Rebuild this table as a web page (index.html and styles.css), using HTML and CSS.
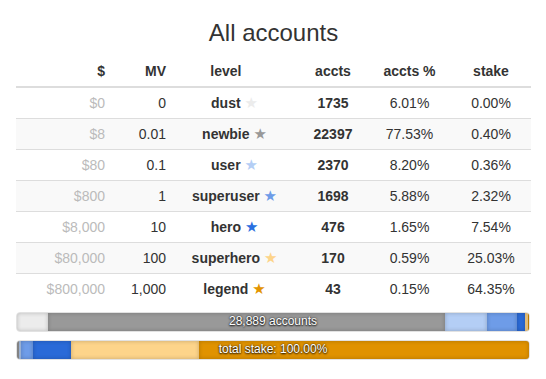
FILE: index.html
```html
<!DOCTYPE html>
<html>
<head>
<meta charset="utf-8">
<link rel="stylesheet" href="styles.css">
</head>
<body>
<div class="page">
  <h3 class="title">All accounts</h3>
  <table class="tbl">
    <colgroup>
      <col style="width:94px"><col style="width:61px"><col style="width:127px"><col style="width:70px"><col style="width:83px"><col style="width:80px">
    </colgroup>
    <thead>
      <tr>
        <th class="r">$</th>
        <th class="r">MV</th>
        <th class="c">level <span class="star hidden">★</span></th>
        <th class="c">accts</th>
        <th class="c">accts %</th>
        <th class="c">stake</th>
      </tr>
    </thead>
    <tbody>
      <tr><td class="r usd">$0</td><td class="r">0</td><td class="c b">dust <span class="star s-dust">★</span></td><td class="c b">1735</td><td class="c">6.01%</td><td class="c">0.00%</td></tr>
      <tr><td class="r usd">$8</td><td class="r">0.01</td><td class="c b">newbie <span class="star s-newbie">★</span></td><td class="c b">22397</td><td class="c">77.53%</td><td class="c">0.40%</td></tr>
      <tr><td class="r usd">$80</td><td class="r">0.1</td><td class="c b">user <span class="star s-user">★</span></td><td class="c b">2370</td><td class="c">8.20%</td><td class="c">0.36%</td></tr>
      <tr><td class="r usd">$800</td><td class="r">1</td><td class="c b">superuser <span class="star s-superuser">★</span></td><td class="c b">1698</td><td class="c">5.88%</td><td class="c">2.32%</td></tr>
      <tr><td class="r usd">$8,000</td><td class="r">10</td><td class="c b">hero <span class="star s-hero">★</span></td><td class="c b">476</td><td class="c">1.65%</td><td class="c">7.54%</td></tr>
      <tr><td class="r usd">$80,000</td><td class="r">100</td><td class="c b">superhero <span class="star s-superhero">★</span></td><td class="c b">170</td><td class="c">0.59%</td><td class="c">25.03%</td></tr>
      <tr><td class="r usd">$800,000</td><td class="r">1,000</td><td class="c b">legend <span class="star s-legend">★</span></td><td class="c b">43</td><td class="c">0.15%</td><td class="c">64.35%</td></tr>
    </tbody>
  </table>
  <div class="progress">
    <div class="seg bg-dust" style="width:6.01%"></div>
    <div class="seg bg-newbie" style="width:77.53%"></div>
    <div class="seg bg-user" style="width:8.20%"></div>
    <div class="seg bg-superuser" style="width:5.88%"></div>
    <div class="seg bg-hero" style="width:1.65%"></div>
    <div class="seg bg-superhero" style="width:0.59%"></div>
    <div class="seg bg-legend" style="width:0.15%"></div>
    <span class="label">28,889 accounts</span>
  </div>
  <div class="progress">
    <div class="seg bg-dust" style="width:0%"></div>
    <div class="seg bg-newbie" style="width:0.40%"></div>
    <div class="seg bg-user" style="width:0.36%"></div>
    <div class="seg bg-superuser" style="width:2.32%"></div>
    <div class="seg bg-hero" style="width:7.54%"></div>
    <div class="seg bg-superhero" style="width:25.03%"></div>
    <div class="seg bg-legend" style="width:64.35%"></div>
    <span class="label">total stake: 100.00%</span>
  </div>
</div>
</body>
</html>
```

FILE: styles.css
```css
html, body {
  margin: 0;
  padding: 0;
  background: #fff;
}
body {
  font-family: "Liberation Sans", Arial, sans-serif;
  font-size: 14px;
  line-height: 20px;
  color: #333;
}
.page {
  padding: 0 15px 0 16px;
}
.title {
  margin: 20px 0 10px;
  font-size: 24px;
  line-height: 26px;
  font-weight: 500;
  text-align: center;
  color: #333;
}
.tbl {
  width: 515px;
  border-collapse: collapse;
  border-spacing: 0;
  table-layout: fixed;
  margin-bottom: 8px;
}
.tbl th, .tbl td {
  padding: 5px;
  line-height: 20px;
  white-space: nowrap;
}
.tbl th {
  font-weight: bold;
  border-bottom: 2px solid #ddd;
}
.tbl td {
  border-top: 1px solid #ddd;
}
.tbl tbody tr:first-child td {
  border-top: 0;
}
.tbl tbody tr:nth-child(even) td {
  background: #f9f9f9;
}
.r { text-align: right; }
.c { text-align: center; }
.b { font-weight: bold; }
.usd { color: #bbb; }
.star {
  font-family: "DejaVu Sans", sans-serif;
  font-weight: normal;
  font-size: 15px;
  line-height: 20px;
}
.hidden { visibility: hidden; }
.s-dust { color: #ececec; }
.s-newbie { color: #999; }
.s-user { color: #b4cef5; }
.s-superuser { color: #6e9ce8; }
.s-hero { color: #2a6fe0; }
.s-superhero { color: #fdd48a; }
.s-legend { color: #e39400; }

.progress {
  position: relative;
  display: flex;
  width: 514px;
  height: 20px;
  box-sizing: border-box;
  margin-bottom: 8px;
  background: #f5f5f5;
  border: 1px solid #e2e2e2;
  border-radius: 4px;
  overflow: hidden;
  box-shadow: inset 0 1px 2px rgba(0,0,0,0.1);
}
.seg {
  height: 100%;
  flex: none;
  box-shadow: inset 0 0 4px rgba(0,0,0,0.22);
}
.bg-dust { background: #ececec; }
.bg-newbie { background: #999; }
.bg-user { background: #b4cef5; }
.bg-superuser { background: #6e9ce8; }
.bg-hero { background: #2a6ad8; }
.bg-superhero { background: #fdd48a; }
.bg-legend { background: #e09200; }
.label {
  position: absolute;
  left: 0;
  right: 0;
  top: 0;
  line-height: 17px;
  font-size: 12px;
  color: #fff;
  text-align: center;
  text-shadow: 0 1px 2px rgba(0,0,0,0.9), 0 0 2px rgba(0,0,0,0.8);
}
```
